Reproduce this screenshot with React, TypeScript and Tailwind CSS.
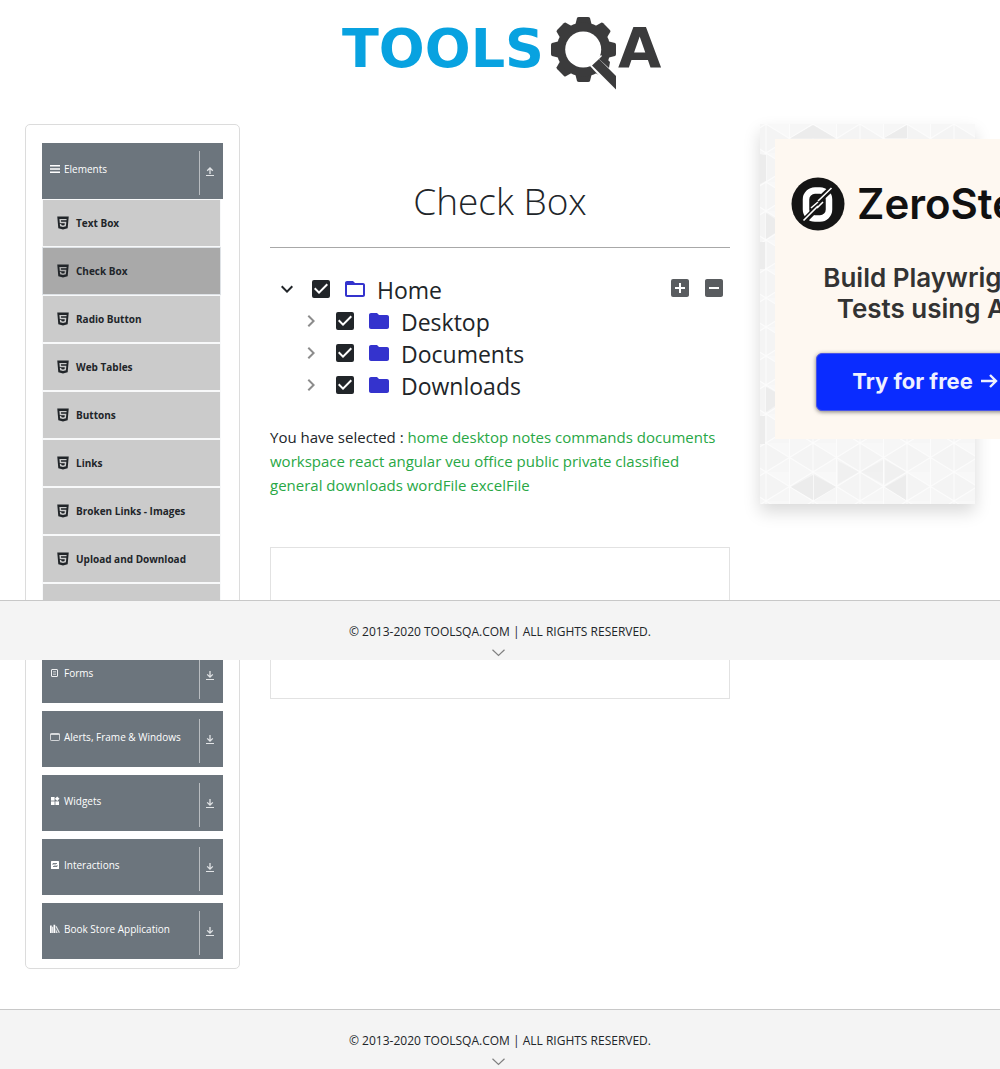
import React from "react";
import {
  MdAddBox,
  MdCheckBox,
  MdChevronRight,
  MdExpandMore,
  MdFolder,
  MdFolderOpen,
  MdIndeterminateCheckBox,
} from "react-icons/md";
import { AiFillHtml5 } from "react-icons/ai";

function Logo() {
  return (
    <svg viewBox="340 13 325 78" className="h-[78px] w-[325px]" role="img" aria-label="ToolsQA">
      <text x="342" y="67" fontSize="54" fontWeight="700" fill="#08a2e0" fontFamily="DejaVu Sans, sans-serif">
        TOOLS
      </text>
      <g fill="#3b3b3c">
        {[0, 45, 90, 135, 180, 225, 270, 315].map((a) => (
          <path key={a} d="M575 26 L577 18 Q577.300 17 579 17 H588 Q589.500 17 590 18 L592 26 Z" transform={`rotate(${a} 583.500 49.500)`} />
        ))}
        <circle cx="583.500" cy="49.500" r="27" />
      </g>
      <circle cx="583.200" cy="49.500" r="18" fill="#fff" />
      <path d="M590 66 L601 55 L622 76 L616 94 Z" fill="#fff" />
      <path d="M599 59 L603 55 L610 62 L609 68 Z" fill="#3b3b3c" />
      <path d="M592 65.500 L599 59 L616 76 V89.500 Z" fill="#3b3b3c" />
      <text x="618" y="67" fontSize="56" fontWeight="700" fill="#3b3b3c" fontFamily="DejaVu Sans, sans-serif">
        A
      </text>
    </svg>
  );
}

const groupIcons: Record<string, React.ReactNode> = {
  Elements: (
    <svg viewBox="0 0 10 10" className="size-[10px]" fill="none" stroke="currentColor" strokeWidth="1.600">
      <path d="M0 1.800h10M0 5h10M0 8.200h10" />
    </svg>
  ),
  Forms: (
    <svg viewBox="0 0 10 10" className="size-[10px]" fill="none" stroke="currentColor">
      <rect x="1.500" y="1.500" width="6" height="7" rx="0.500" strokeWidth="0.900" />
      <path d="M3 3.500h3M3 5h3M3 6.500h3" strokeWidth="0.500" />
    </svg>
  ),
  "Alerts, Frame & Windows": (
    <svg viewBox="0 0 10 10" className="size-[10px]" fill="none" stroke="currentColor">
      <rect x="0.500" y="1.500" width="9" height="7" rx="0.800" strokeWidth="0.700" />
      <path d="M0.500 2.300h9" strokeWidth="0.900" />
    </svg>
  ),
  Widgets: (
    <svg viewBox="0 0 10 10" className="size-[10px]" fill="currentColor">
      <rect x="1" y="1" width="3.600" height="3.600" />
      <path d="M7.200 0.500 9.500 2.800 7.200 5.100 4.900 2.800z" />
      <rect x="1" y="5.400" width="3.600" height="3.600" />
      <rect x="5.400" y="5.400" width="3.600" height="3.600" />
    </svg>
  ),
  Interactions: (
    <svg viewBox="0 0 10 10" className="size-[10px]">
      <rect x="1" y="1" width="8" height="8" rx="0.500" fill="currentColor" />
      <path d="M3 5V3.500h4M3 6.500h4V5M4.200 5h1.600" fill="none" stroke="#6c757d" strokeWidth="0.900" />
    </svg>
  ),
  "Book Store Application": (
    <svg viewBox="0 0 10 10" className="size-[10px]" fill="currentColor">
      <path d="M0 1.500h1.700V9H0zM2.200 2.800h0.900V9h-0.900zM3.500 0.800h1.700V9H3.500z" />
      <path d="M5.400 2.600 6.500 2.100 9.900 8.600 8.800 9zM5.700 4.500 7.700 9H5.700z" opacity="0.800" />
    </svg>
  ),
};

function ToggleArrow({ up }: { up?: boolean }) {
  return (
    <svg viewBox="0 0 8 9" className="h-[9px] w-2" fill="none" stroke="currentColor" strokeWidth="1">
      <path d="M0 8.500h8" />
      <path d={up ? "M4 7V1.200M1.200 3.800 4 1 6.800 3.800" : "M4 0v6M1.200 3.400 4 6.200 6.800 3.400"} strokeWidth="1.300" />
    </svg>
  );
}

function GroupHeader({ name, open }: { name: string; open?: boolean }) {
  return (
    <button
      type="button"
      aria-expanded={!!open}
      className="flex h-14 w-full justify-between bg-[#6c757d] py-2 pl-2 text-left text-[10px] leading-4 text-white"
    >
      <span className="flex items-center gap-1 self-start pt-[10px]">
        <span className="flex w-[10px] justify-center">{groupIcons[name]}</span>
        {name}
      </span>
      <span className="flex h-11 w-6 items-center border-l border-[#b8bcc0] pb-1 pl-[6px] text-[#e2e4e6]">
        <ToggleArrow up={open} />
      </span>
    </button>
  );
}

const elementItems = [
  "Text Box",
  "Check Box",
  "Radio Button",
  "Web Tables",
  "Buttons",
  "Links",
  "Broken Links - Images",
  "Upload and Download",
  "Dynamic Properties",
];

function Sidebar() {
  return (
    <nav className="rounded-[5px] border border-[#dcdcdc] px-4 pt-[18px] pb-[9px]">
      <GroupHeader name="Elements" open />
      <ul className="mr-[2px] mb-4">
        {elementItems.map((item) => (
          <li key={item}>
            <a
              href="#"
              className={
                "flex h-12 items-center gap-[5px] border pl-3 text-[10px] leading-4 font-bold text-[#212529] " +
                (item === "Check Box" ? "border-[#dee2e6] bg-[#a9a9a9]" : "border-[#f8f9fa] bg-[#cbcbcb]")
              }
            >
              <AiFillHtml5 className="size-4" />
              {item}
            </a>
          </li>
        ))}
      </ul>
      <div className="flex flex-col gap-2">
        {["Forms", "Alerts, Frame & Windows", "Widgets", "Interactions", "Book Store Application"].map((name) => (
          <GroupHeader key={name} name={name} />
        ))}
      </div>
    </nav>
  );
}

function TreeRow({ label, root }: { label: string; root?: boolean }) {
  return (
    <div className="flex h-8 items-center">
      <button
        type="button"
        aria-label={(root ? "Collapse " : "Expand ") + label}
        className={"flex w-[34px] justify-center " + (root ? "text-[#212529]" : "text-[#8c8c8c]")}
      >
        {root ? <MdExpandMore className="size-6" /> : <MdChevronRight className="size-6" />}
      </button>
      <label className="flex items-center">
        <span className="grid w-[34px] place-items-center">
          <input type="checkbox" defaultChecked className="col-start-1 row-start-1 size-[18px] appearance-none" />
          <MdCheckBox className="pointer-events-none col-start-1 row-start-1 size-6 text-[#212529]" />
        </span>
        <span className="flex w-[34px] justify-center text-[#3433cd]">
          {root ? <MdFolderOpen className="size-6" /> : <MdFolder className="size-6" />}
        </span>
        <span className="pl-[5px] pt-[2px] text-[23px] leading-[30px]">{label}</span>
      </label>
    </div>
  );
}

function Main() {
  return (
    <main>
      <h1 className="border-b border-[#a8a8a8] pt-[51px] pb-[21px] text-center text-[37px] leading-[51px] font-light">
        Check Box
      </h1>
      <div className="flex items-start justify-between pt-[25px]">
        <ul>
          <li>
            <TreeRow label="Home" root />
            <ul className="pl-6">
              {["Desktop", "Documents", "Downloads"].map((label) => (
                <li key={label}>
                  <TreeRow label={label} />
                </li>
              ))}
            </ul>
          </li>
        </ul>
        <div className="flex gap-[10px] pt-[3px] pr-1 text-[#595c5f]">
          <button type="button" aria-label="Expand all">
            <MdAddBox className="size-6" />
          </button>
          <button type="button" aria-label="Collapse all">
            <MdIndeterminateCheckBox className="size-6" />
          </button>
        </div>
      </div>
      <p className="mt-6 text-[15px] leading-6">
        You have selected :{" "}
        <span className="text-[#28a745]">
          home desktop notes commands documents workspace react angular veu office public private classified general
          downloads wordFile excelFile
        </span>
      </p>
      <div className="mt-[50px] h-38 border border-[#e2e2e2]" />
    </main>
  );
}

function TriangleBackdrop() {
  return (
    <svg className="col-start-1 row-start-1 h-full w-full" aria-hidden="true">
      <defs>
        <pattern id="triangles" x="6" y="0" width="47" height="29" patternUnits="userSpaceOnUse">
          <rect width="47" height="29" fill="#f6f6f6" />
          <path d="M0 0 23.500 14.500 0 29zM47 0v29L23.500 14.500z" fill="#f4f4f4" />
          <path d="M0 0h23.500v14.500z" fill="#f8f8f8" />
          <path d="M0 0 47 29M47 0 0 29M0 0v29M23.500 0v29M47 0v29" stroke="#fcfcfc" strokeWidth="1.200" />
        </pattern>
      </defs>
      <rect width="100%" height="100%" fill="url(#triangles)" />
      <g fill="#ececec">
        <path d="M30 14.500 53 1 76 14.500z M124 14 147 1V14z M6 31v26l-6 3V30z M6 89 15 95v14l-9 6z" />
        <path d="M0 118h5v27H0z M6 263l9 5v14l-9 6z M0 292h5v28H0z" />
        <path d="M31 363 53 351V376z M54 351 76 363 54 376z M125 363 146 351v25z" />
        <path d="M78 337v23l21-12zM101 348l22-12v24zM125 336v24l21-12z" opacity="0.600" />
      </g>
    </svg>
  );
}

function Ad() {
  return (
    <aside className="grid h-[380px] grid-cols-[100%] shadow-[0_8px_16px_rgba(0,0,0,0.150)]">
      <TriangleBackdrop />
      <a
        href="#"
        className="col-start-1 row-start-1 m-[15px] flex h-[300px] w-[300px] flex-col items-center bg-[#fef8f1] font-['Inter',sans-serif] text-[#111]"
      >
        <span className="flex w-full items-center gap-3 pt-9 pl-4 text-[42px] leading-[58px] font-semibold">
          <svg viewBox="0 0 54 54" className="size-[54px] shrink-0" aria-hidden="true">
            <circle cx="27" cy="27" r="26.500" fill="#151515" />
            <rect x="15" y="13.500" width="23" height="28" rx="9" fill="none" stroke="#fff" strokeWidth="6.500" />
            <path d="M13 44 26 31M27 24 41 11" stroke="#151515" strokeWidth="6" />
            <path d="M12.500 43.500 27 29M20 31 27 25M26 31 32 25M27 24 40.500 11" stroke="#fff" strokeWidth="1.600" />
          </svg>
          ZeroStep
        </span>
        <span className="mt-[29px] text-center text-[26px] leading-[31px] font-semibold text-[#333]">
          Build Playwright
          <br />
          Tests using AI
        </span>
        <span className="mt-[29px] flex h-[58px] w-[218px] items-center justify-center gap-2 rounded-md border border-[#4a54e8] bg-[#0a2cff] pb-[2px] text-[22px] font-bold whitespace-nowrap text-[#eef0ff] shadow-[0_1px_4px_rgba(0,0,0,0.500)]">
          Try for free
          <svg viewBox="0 0 17 16" className="h-4 w-[17px]" fill="none" stroke="currentColor" strokeWidth="2.400" aria-hidden="true">
            <path d="M0 8h15M9 2l6 6-6 6" />
          </svg>
        </span>
      </a>
    </aside>
  );
}

function Footer() {
  return (
    <footer className="flex h-15 flex-col items-center border-t border-[#c8c8c8] bg-[#f4f4f4] pt-[22px] text-[12px] leading-[18px]">
      <span>© 2013-2020 TOOLSQA.COM | ALL RIGHTS RESERVED.</span>
      <svg viewBox="0 0 13 8" className="mt-2 mr-1 h-2 w-[13px]" fill="none" stroke="#808080" strokeWidth="1.200" aria-hidden="true">
        <path d="M0.500 0.800 6.500 6.500 12.500 0.800" />
      </svg>
    </footer>
  );
}

export default function App() {
  return (
    <div className="relative overflow-x-hidden bg-white font-['Open_Sans','Noto_Sans',sans-serif] text-[#212529]">
      <header className="flex justify-center pt-[13px] pb-[33px] pl-[5px]">
        <a href="#">
          <Logo />
        </a>
      </header>
      <div className="grid grid-cols-4 items-start px-[10px] pb-10">
        <div className="px-[15px]">
          <Sidebar />
        </div>
        <div className="col-span-2 px-[15px]">
          <Main />
        </div>
        <div className="px-[15px]">
          <Ad />
        </div>
      </div>
      <Footer />
      <div className="absolute inset-x-0 top-[600px]">
        <Footer />
      </div>
    </div>
  );
}
